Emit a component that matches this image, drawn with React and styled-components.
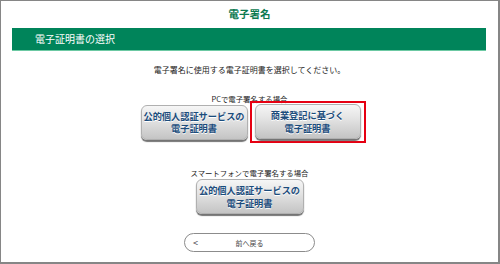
import styled, { createGlobalStyle } from 'styled-components'

const GlobalStyle = createGlobalStyle`
  body {
    margin: 0;
    background: #fff;
    font-family: "Noto Sans CJK JP", "Noto Sans", sans-serif;
  }
`

const Frame = styled.div`
  width: 500px;
  height: 264px;
  box-sizing: border-box;
  border-style: solid;
  border-color: #868686;
  border-width: 1px 2px 2px 1px;
  display: flex;
  flex-direction: column;
  align-items: center;
  color: #333;
`

const PageTitle = styled.h1`
  margin: 0 0 1px;
  height: 26px;
  line-height: 26px;
  font-size: 10.5px;
  font-weight: bold;
  color: #0b7a50;
`

const SectionBar = styled.div`
  align-self: stretch;
  margin: 0 12px 0 11px;
  height: 22px;
  line-height: 22px;
  padding-left: 23px;
  background: #00845a;
  border-bottom: 1px solid #6cc9a3;
  color: #fff;
  font-size: 10px;
`

const Lead = styled.p`
  margin: 13px 0 0;
  line-height: 12px;
  font-size: 8px;
  color: #222;
`

const Caption = styled.div`
  margin-top: ${(p) => p.$top}px;
  line-height: 8px;
  height: 8px;
  font-size: 7.4px;
  color: #222;
`

const ButtonRow = styled.div`
  display: flex;
  align-items: center;
  gap: 2px;
  margin-top: -2px;
  padding-left: 7px;
`

const CertButton = styled.button`
  width: ${(p) => p.$w}px;
  height: 35px;
  margin-top: ${(p) => p.$top || 0}px;
  padding: 0;
  border: 1px solid #b0b0b0;
  border-radius: 6px;
  background: linear-gradient(#f6f6f6 0%, #e4e4e4 40%, #c4c4c4 100%);
  box-shadow: 0 2px 1px #747474;
  font-family: inherit;
  font-size: 9.2px;
  font-weight: bold;
  line-height: 12.5px;
  color: #1b4c7c;
  text-shadow: 0 1px 0 #fff;
  white-space: nowrap;
  cursor: pointer;
`

const Selected = styled.div`
  border: 2px solid #e60012;
  padding: 1px 3px 2px;
`

const BackButton = styled.button`
  position: relative;
  margin-top: 19px;
  width: 131px;
  height: 19px;
  padding: 0;
  border: 1px solid #8c8c8c;
  border-radius: 10px;
  background: #fff;
  font-family: inherit;
  font-size: 7px;
  color: #444;
  cursor: pointer;
`

const Chevron = styled.span`
  position: absolute;
  left: 8px;
  top: 0;
  line-height: 17px;
  font-size: 9px;
  color: #444;
`

export default function App() {
  return (
    <>
      <GlobalStyle />
      <Frame>
        <PageTitle>電子署名</PageTitle>
        <SectionBar>電子証明書の選択</SectionBar>
        <Lead>電子署名に使用する電子証明書を選択してください。</Lead>
        <Caption $top={19}>PCで電子署名する場合</Caption>
        <ButtonRow>
          <CertButton $w={107}>
            公的個人認証サービスの
            <br />
            電子証明書
          </CertButton>
          <Selected>
            <CertButton $w={106}>
              商業登記に基づく
              <br />
              電子証明書
            </CertButton>
          </Selected>
        </ButtonRow>
        <Caption $top={26}>スマートフォンで電子署名する場合</Caption>
        <CertButton $w={108} $top={2}>
          公的個人認証サービスの
          <br />
          電子証明書
        </CertButton>
        <BackButton>
          <Chevron>&lt;</Chevron>
          前へ戻る
        </BackButton>
      </Frame>
    </>
  )
}
